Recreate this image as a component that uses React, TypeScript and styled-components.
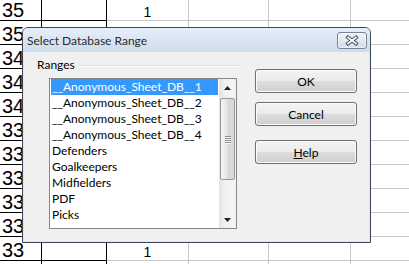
import React from 'react';
import styled, { createGlobalStyle } from 'styled-components';

const GlobalStyle = createGlobalStyle`
  html, body { margin: 0; padding: 0; background: #fff; }
  body { width: 409px; height: 264px; overflow: hidden; }
`;

const Screen = styled.div`
  position: relative;
  width: 409px;
  height: 264px;
  overflow: hidden;
  background: #fff;
`;

// spreadsheet behind the dialog
const Sheet = styled.div`
  margin-top: -3px;
`;

const SheetRow = styled.div`
  display: flex;
  height: 24px;
`;

const Cell = styled.div<{ $w: number; $dark?: boolean; $big?: boolean }>`
  box-sizing: border-box;
  flex: none;
  width: ${p => p.$w}px;
  height: 24px;
  border-right: 1px solid ${p => (p.$dark ? '#000' : '#c6c6c6')};
  border-bottom: 1px solid ${p => (p.$dark ? '#000' : '#c6c6c6')};
  padding: ${p => (p.$big ? '2px 0 0 2px' : '4px 0 0 0')};
  font-family: "Liberation Sans", Arial, sans-serif;
  font-size: ${p => (p.$big ? 20 : 14)}px;
  line-height: 23px;
  text-align: ${p => (p.$big ? 'left' : 'center')};
  color: #000;
  white-space: nowrap;
`;

const Dialog = styled.div`
  position: absolute;
  left: 22px;
  top: 27px;
  width: 349px;
  height: 216px;
  box-sizing: border-box;
  border: 1px solid #3c4757;
  border-radius: 6px 6px 0 0;
  background: #dde7f2;
  padding: 0 1px 1px 1px;
  display: flex;
  flex-direction: column;
  font-family: Lato, "Noto Sans", sans-serif;
  font-size: 12px;
  color: #000;
`;

const TitleBar = styled.div`
  height: 24px;
  flex: none;
  display: flex;
  align-items: flex-start;
  justify-content: space-between;
  padding: 0 3px 0 4px;
  margin: 0 -1px;
  border-radius: 5px 5px 0 0;
  background: linear-gradient(#e6eef8, #cfdcec);
`;

const Title = styled.span`
  margin-top: 5px;
  line-height: 15px;
  color: #2a2a2a;
`;

const CloseButton = styled.div`
  box-sizing: border-box;
  width: 30px;
  height: 17px;
  margin-top: 4px;
  border: 1px solid #76849a;
  border-radius: 3px;
  background: linear-gradient(#f0f4f9, #d2dcea);
  box-shadow: inset 0 0 0 1px rgba(255, 255, 255, 0.6);
  display: flex;
  align-items: center;
  justify-content: center;
`;

const Client = styled.div`
  flex: 1;
  display: flex;
  background: #f0f0f0;
  padding: 5px 0 0 13px;
`;

const Group = styled.div`
  width: 204px;
  display: flex;
  flex-direction: column;
`;

const GroupHeader = styled.div`
  display: flex;
  align-items: center;
  gap: 4px;
  line-height: 15px;
  height: 15px;
`;

const GroupLine = styled.div`
  flex: 1;
  border-top: 1px solid #d5dfe5;
  border-bottom: 1px solid #fff;
  margin-top: 2px;
`;

const ListBox = styled.div`
  box-sizing: border-box;
  width: 188px;
  height: 151px;
  margin: 6px 0 0 12px;
  border: 1px solid #828790;
  background: #fff;
  display: flex;
`;

const Items = styled.div`
  flex: 1;
  padding: 0 1px;
  overflow: hidden;
`;

const Item = styled.div<{ $selected?: boolean }>`
  height: 16px;
  line-height: 16px;
  padding-left: 1px;
  white-space: nowrap;
  background: ${p => (p.$selected ? '#3399ff' : 'transparent')};
  color: ${p => (p.$selected ? '#fff' : '#000')};
`;

const ScrollBar = styled.div`
  width: 17px;
  flex: none;
  display: flex;
  flex-direction: column;
  background: linear-gradient(90deg, #e2e2e2, #f2f2f2 35%, #f4f4f4);
`;

const Arrow = styled.div`
  height: 17px;
  flex: none;
  display: flex;
  align-items: center;
  justify-content: center;
`;

const Track = styled.div`
  flex: 1;
  padding-top: 2px;
`;

const Thumb = styled.div`
  box-sizing: border-box;
  width: 15px;
  height: 82px;
  margin-left: 1px;
  border: 1px solid #979797;
  border-radius: 2px;
  background: linear-gradient(90deg, #f4f4f4, #e6e6e6 45%, #d6d6d6 55%, #dcdcdc);
  display: flex;
  flex-direction: column;
  align-items: center;
  justify-content: center;
  gap: 1px;
`;

const Grip = styled.div`
  width: 6px;
  height: 1px;
  background: #8a8a8a;
  box-shadow: 0 1px 0 #fafafa;
`;

const ButtonColumn = styled.div`
  display: flex;
  flex-direction: column;
  margin: 12px 0 0 14px;
`;

const Button = styled.div<{ $gap?: number }>`
  box-sizing: border-box;
  width: 102px;
  height: 24px;
  margin-top: ${p => p.$gap ?? 0}px;
  border: 1px solid #707070;
  border-radius: 3px;
  background: linear-gradient(#f3f3f3 0%, #ebebeb 48%, #dddddd 52%, #cfcfcf 100%);
  box-shadow: inset 0 0 0 1px #fbfbfb;
  display: flex;
  align-items: center;
  justify-content: center;
  line-height: 15px;
`;

const widths = [42, 65, 82, 80, 82, 100];
const labels = ['35', '35', '34', '34', '34', '33', '33', '33', '33', '33', '33', ''];
const ranges = [
  '__Anonymous_Sheet_DB__1',
  '__Anonymous_Sheet_DB__2',
  '__Anonymous_Sheet_DB__3',
  '__Anonymous_Sheet_DB__4',
  'Defenders',
  'Goalkeepers',
  'Midfielders',
  'PDF',
  'Picks',
];

export default function App(): React.ReactElement {
  return (
    <Screen>
      <GlobalStyle />
      <Sheet>
        {labels.map((label, r) => (
          <SheetRow key={r}>
            <Cell $w={widths[0]} $dark $big>{label}</Cell>
            <Cell $w={widths[1]} $dark />
            <Cell $w={widths[2]}>{r === 0 || r === 10 ? '1' : ''}</Cell>
            <Cell $w={widths[3]} />
            <Cell $w={widths[4]} />
            <Cell $w={widths[5]} />
          </SheetRow>
        ))}
      </Sheet>

      <Dialog>
        <TitleBar>
          <Title>Select Database Range</Title>
          <CloseButton>
            <svg width="14" height="11" viewBox="0 0 14 11">
              <path d="M3 2.5 L11 8.5 M11 2.5 L3 8.5" stroke="#3a4352" strokeWidth="3.6" strokeLinecap="square" />
              <path d="M3 2.5 L11 8.5 M11 2.5 L3 8.5" stroke="#fff" strokeWidth="1.7" strokeLinecap="square" />
            </svg>
          </CloseButton>
        </TitleBar>
        <Client>
          <Group>
            <GroupHeader>
              <span>Ranges</span>
              <GroupLine />
            </GroupHeader>
            <ListBox>
              <Items>
                {ranges.map((name, i) => (
                  <Item key={name} $selected={i === 0}>{name}</Item>
                ))}
              </Items>
              <ScrollBar>
                <Arrow>
                  <svg width="7" height="4" viewBox="0 0 7 4"><path d="M0 4 L3.5 0 L7 4 Z" fill="#222" /></svg>
                </Arrow>
                <Track>
                  <Thumb>
                    <Grip />
                    <Grip />
                    <Grip />
                    <Grip />
                  </Thumb>
                </Track>
                <Arrow>
                  <svg width="7" height="4" viewBox="0 0 7 4"><path d="M0 0 L7 0 L3.5 4 Z" fill="#222" /></svg>
                </Arrow>
              </ScrollBar>
            </ListBox>
          </Group>
          <ButtonColumn>
            <Button>OK</Button>
            <Button $gap={9}>Cancel</Button>
            <Button $gap={14}><span><u>H</u>elp</span></Button>
          </ButtonColumn>
        </Client>
      </Dialog>
    </Screen>
  );
}
